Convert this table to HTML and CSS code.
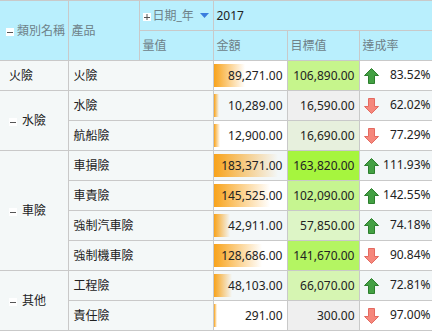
FILE: index.html
```html
<!DOCTYPE html>
<html lang="zh-Hant">
<head>
  <meta charset="UTF-8">
  <meta name="viewport" content="width=device-width, initial-scale=1.0">
  <title>樞紐分析</title>
  <link rel="stylesheet" href="styles.css">
</head>
<body>
  <table class="pivot">
    <colgroup>
      <col class="c-cat">
      <col class="c-prod">
      <col class="c-field">
      <col class="c-amt">
      <col class="c-target">
      <col class="c-rate">
    </colgroup>
    <thead>
      <tr>
        <th rowspan="2" class="hd-cat"><svg class="tog" width="8" height="8"><rect width="8" height="8" fill="#fff"/><rect x="1" y="4" width="6" height="1" fill="#555"/></svg>類別名稱</th>
        <th rowspan="2" class="hd-prod">產品</th>
        <th class="hd-date"><svg class="tog" width="8" height="8"><rect width="8" height="8" fill="#fff"/><rect x="1" y="4" width="6" height="1" fill="#555"/><rect x="3.5" y="1" width="1" height="6" fill="#555"/></svg>日期_年<svg class="caret" width="9" height="5"><path d="M0 0h9L4.5 5z" fill="#3b7ddd"/></svg></th>
        <th colspan="3" class="hd-year">2017</th>
      </tr>
      <tr>
        <th>量值</th>
        <th>金額</th>
        <th>目標值</th>
        <th>達成率</th>
      </tr>
    </thead>
    <tbody>
      <tr class="odd">
        <td class="cat">火險</td>
        <td class="prod" colspan="2">火險</td>
        <td class="amt"><span class="bar" style="width:43.4%"></span><span class="num">89,271.00</span></td>
        <td class="target" style="background:#c6f58c">106,890.00</td>
        <td class="rate"><svg class="arrow" width="15" height="16"><path class="up" d="M7.5 0.5L14.5 7.5H10.5V15.5H4.5V7.5H0.5Z"/></svg><span>83.52%</span></td>
      </tr>
      <tr class="even">
        <td class="cat" rowspan="2"><svg class="tog" width="8" height="8"><rect width="8" height="8" fill="#fff"/><rect x="1" y="4" width="6" height="1" fill="#555"/></svg>水險</td>
        <td class="prod" colspan="2">水險</td>
        <td class="amt"><span class="bar" style="width:8%"></span><span class="num">10,289.00</span></td>
        <td class="target" style="background:#efefef">16,590.00</td>
        <td class="rate"><svg class="arrow" width="15" height="16"><path class="down" d="M7.5 15.5L14.5 8.5H10.5V0.5H4.5V8.5H0.5Z"/></svg><span>62.02%</span></td>
      </tr>
      <tr class="odd">
        <td class="prod" colspan="2">航船險</td>
        <td class="amt"><span class="bar" style="width:8.5%"></span><span class="num">12,900.00</span></td>
        <td class="target" style="background:#e7f0dd">16,690.00</td>
        <td class="rate"><svg class="arrow" width="15" height="16"><path class="down" d="M7.5 15.5L14.5 8.5H10.5V0.5H4.5V8.5H0.5Z"/></svg><span>77.29%</span></td>
      </tr>
      <tr class="even">
        <td class="cat" rowspan="4"><svg class="tog" width="8" height="8"><rect width="8" height="8" fill="#fff"/><rect x="1" y="4" width="6" height="1" fill="#555"/></svg>車險</td>
        <td class="prod" colspan="2">車損險</td>
        <td class="amt"><span class="bar" style="width:89%"></span><span class="num">183,371.00</span></td>
        <td class="target" style="background:#a6f53e">163,820.00</td>
        <td class="rate"><svg class="arrow" width="15" height="16"><path class="up" d="M7.5 0.5L14.5 7.5H10.5V15.5H4.5V7.5H0.5Z"/></svg><span>111.93%</span></td>
      </tr>
      <tr class="odd">
        <td class="prod" colspan="2">車責險</td>
        <td class="amt"><span class="bar" style="width:77%"></span><span class="num">145,525.00</span></td>
        <td class="target" style="background:#c6f590">102,090.00</td>
        <td class="rate"><svg class="arrow" width="15" height="16"><path class="up" d="M7.5 0.5L14.5 7.5H10.5V15.5H4.5V7.5H0.5Z"/></svg><span>142.55%</span></td>
      </tr>
      <tr class="even">
        <td class="prod" colspan="2">強制汽車險</td>
        <td class="amt"><span class="bar" style="width:23%"></span><span class="num">42,911.00</span></td>
        <td class="target" style="background:#ddf5c6">57,850.00</td>
        <td class="rate"><svg class="arrow" width="15" height="16"><path class="up" d="M7.5 0.5L14.5 7.5H10.5V15.5H4.5V7.5H0.5Z"/></svg><span>74.18%</span></td>
      </tr>
      <tr class="odd">
        <td class="prod" colspan="2">強制機車險</td>
        <td class="amt"><span class="bar" style="width:66%"></span><span class="num">128,686.00</span></td>
        <td class="target" style="background:#b4f562">141,670.00</td>
        <td class="rate"><svg class="arrow" width="15" height="16"><path class="down" d="M7.5 15.5L14.5 8.5H10.5V0.5H4.5V8.5H0.5Z"/></svg><span>90.84%</span></td>
      </tr>
      <tr class="even">
        <td class="cat" rowspan="2"><svg class="tog" width="8" height="8"><rect width="8" height="8" fill="#fff"/><rect x="1" y="4" width="6" height="1" fill="#555"/></svg>其他</td>
        <td class="prod" colspan="2">工程險</td>
        <td class="amt"><span class="bar" style="width:25%"></span><span class="num">48,103.00</span></td>
        <td class="target" style="background:#d6f5b2">66,070.00</td>
        <td class="rate"><svg class="arrow" width="15" height="16"><path class="up" d="M7.5 0.5L14.5 7.5H10.5V15.5H4.5V7.5H0.5Z"/></svg><span>72.81%</span></td>
      </tr>
      <tr class="odd">
        <td class="prod" colspan="2">責任險</td>
        <td class="amt"><span class="bar" style="width:4%"></span><span class="num">291.00</span></td>
        <td class="target" style="background:#efefef">300.00</td>
        <td class="rate"><svg class="arrow" width="15" height="16"><path class="down" d="M7.5 15.5L14.5 8.5H10.5V0.5H4.5V8.5H0.5Z"/></svg><span>97.00%</span></td>
      </tr>
    </tbody>
  </table>
</body>
</html>
```

FILE: styles.css
```css
body {
  margin: 0;
  font-family: "Noto Sans", "Noto Sans CJK TC", sans-serif;
  font-size: 12px;
  color: #222;
  background: #fff;
  overflow: hidden;
}

.pivot {
  border-collapse: collapse;
  table-layout: fixed;
  width: 435px;
}

.c-cat { width: 68px; }
.c-prod { width: 71px; }
.c-field { width: 74px; }
.c-amt { width: 74px; }
.c-target { width: 72px; }
.c-rate { width: 76px; }

.pivot th,
.pivot td {
  border: 1px solid #c9c9c9;
  padding: 0 4px;
  white-space: nowrap;
  overflow: hidden;
  line-height: 16px;
}

.pivot tr > :first-child {
  border-left: none;
}

/* header */
.pivot th {
  background: #b9effd;
  color: #6e8188;
  font-weight: normal;
  text-align: left;
  height: 29px;
  padding-left: 3px;
}

.pivot th.hd-cat {
  padding-left: 6px;
}

.pivot th.hd-year {
  color: #222;
}

.tog {
  vertical-align: -1px;
  margin-right: 2px;
}

.hd-cat .tog {
  margin-right: 3px;
}

.caret {
  margin-left: 6px;
  vertical-align: 2px;
}

/* body */
.pivot td {
  height: 29px;
  padding: 0 4px;
}

.pivot td.cat,
.pivot td.prod {
  background: #f4f8f8;
  color: #222;
}

.pivot td.cat {
  padding-left: 9px;
}

.pivot td.cat .tog {
  margin-right: 5px;
}

.pivot td.prod {
  padding-left: 5px;
}

.odd td.amt,
.odd td.rate {
  background: #fff;
}

.even td.amt,
.even td.rate {
  background: #f3f7f8;
}

.amt {
  position: relative;
  text-align: right;
}

.amt .bar {
  position: absolute;
  left: 0;
  top: 3px;
  bottom: 3px;
  min-width: 3px;
  background: linear-gradient(to right, #f8a31b, rgba(255, 255, 255, 0));
}

.amt .num {
  position: relative;
}

.target {
  text-align: right;
}

.rate {
  text-align: right;
}

.rate .arrow {
  float: left;
  margin-top: 1px;
}

.arrow .up {
  fill: #43a043;
  stroke: #2c7f2c;
}

.arrow .down {
  fill: #f5877c;
  stroke: #e46a60;
}
```
